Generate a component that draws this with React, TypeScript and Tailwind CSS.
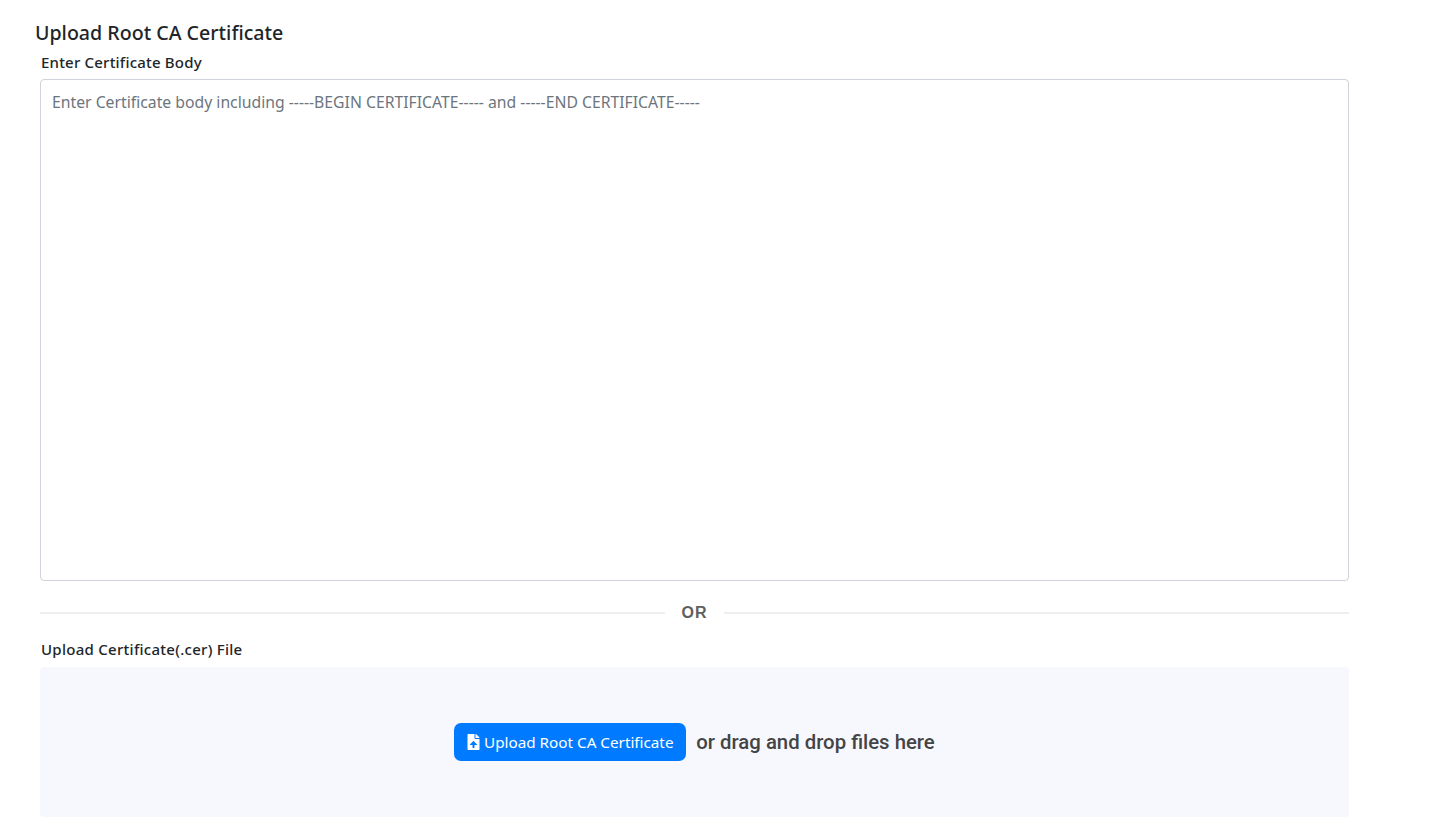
import React from 'react';
import { FaFileUpload } from 'react-icons/fa';

const uiFont = "font-['Noto_Sans','Open_Sans',sans-serif]";

export default function App() {
  return (
    <div className={`min-h-[826px] bg-white ${uiFont}`}>
      <div className="w-[1349px] pl-[35px] pt-[20px]">
        <h2 className="h-[26px] text-[19.6px] leading-[26px] font-medium text-[#212529]">
          Upload Root CA Certificate
        </h2>
        <div className="pl-[5px]">
          <label className="block h-[33px] pt-[6px] pl-px text-[15px] leading-[20px] font-medium tracking-[0.2px] text-[#212529]">
            Enter Certificate Body
          </label>
          <textarea
            className="block h-[502px] w-full resize-none rounded border border-[#ced4da] px-[11px] pt-[10px] pb-[11px] text-[15.75px] leading-[24px] text-[#495057] outline-none placeholder:text-[#6c757d]"
            placeholder="Enter Certificate body including -----BEGIN CERTIFICATE----- and -----END CERTIFICATE-----"
          />
          <div className="flex h-[62px] items-center pt-[2px]">
            <div className="h-[2px] flex-1 bg-[#eeeeee]" />
            <span className="w-[59px] text-center font-['Liberation_Sans',sans-serif] text-[16px] font-bold tracking-[1px] text-[#5f5f5f]">
              OR
            </span>
            <div className="h-[2px] flex-1 bg-[#eeeeee]" />
          </div>
          <label className="block h-[24px] -mt-px pl-px pb-px box-content text-[15px] leading-[14px] font-medium tracking-[0.27px] text-[#212529]">
            Upload Certificate(.cer) File
          </label>
          <div className="flex h-[150px] items-center justify-center gap-[10px] rounded bg-[#f7f8fd]">
            <button className="flex h-[38px] w-[232px] items-center justify-center gap-[4px] rounded-[7px] bg-[#007bff] text-[15.25px] text-white">
              <FaFileUpload className="h-[16px] w-[13px]" />
              Upload Root CA Certificate
            </button>
            <span className="font-['Roboto',sans-serif] text-[20.35px] font-medium text-[#444444]">
              or drag and drop files here
            </span>
          </div>
        </div>
      </div>
    </div>
  );
}
